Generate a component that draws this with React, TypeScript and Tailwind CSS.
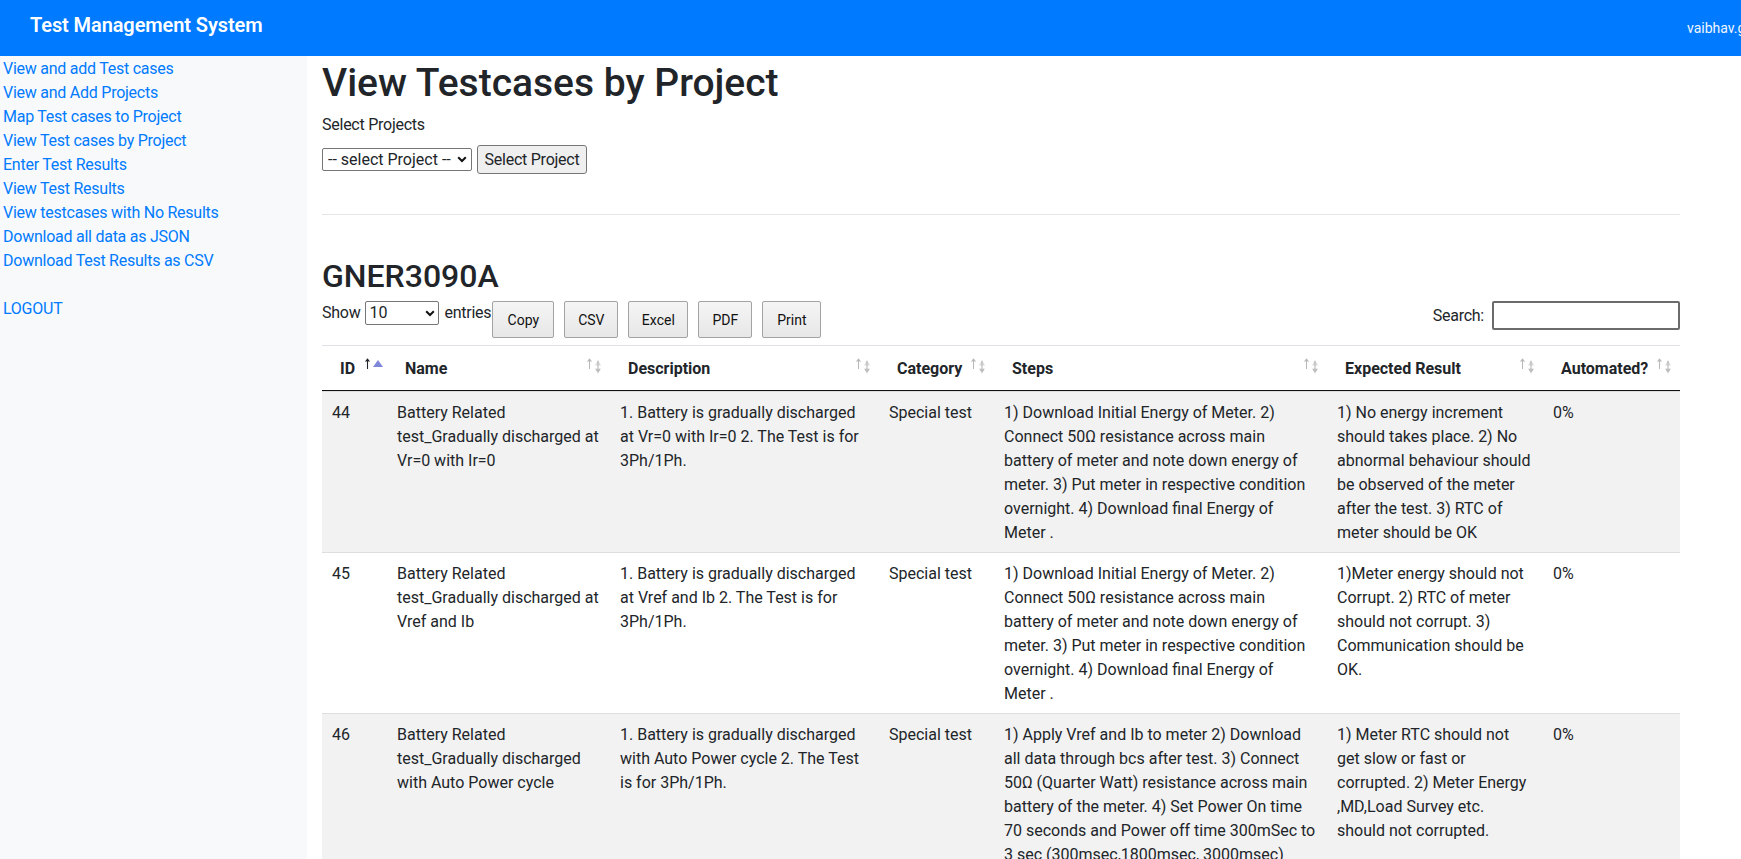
import React from 'react';

const sideLinks = [
  'View and add Test cases',
  'View and Add Projects',
  'Map Test cases to Project',
  'View Test cases by Project',
  'Enter Test Results',
  'View Test Results',
  'View testcases with No Results',
  'Download all data as JSON',
  'Download Test Results as CSV',
];

const columns = [
  { label: 'ID', sorted: true },
  { label: 'Name' },
  { label: 'Description' },
  { label: 'Category' },
  { label: 'Steps' },
  { label: 'Expected Result' },
  { label: 'Automated?' },
];

const rows = [
  {
    id: '44',
    name: 'Battery Related test_Gradually discharged at Vr=0 with Ir=0',
    description: '1. Battery is gradually discharged at Vr=0 with Ir=0 2. The Test is for 3Ph/1Ph.',
    category: 'Special test',
    steps:
      '1) Download Initial Energy of Meter. 2) Connect 50Ω resistance across main battery of meter and note down energy of meter. 3) Put meter in respective condition overnight. 4) Download final Energy of Meter .',
    expected:
      '1) No energy increment should takes place. 2) No abnormal behaviour should be observed of the meter after the test. 3) RTC of meter should be OK',
    automated: '0%',
  },
  {
    id: '45',
    name: 'Battery Related test_Gradually discharged at Vref and Ib',
    description: '1. Battery is gradually discharged at Vref and Ib 2. The Test is for 3Ph/1Ph.',
    category: 'Special test',
    steps:
      '1) Download Initial Energy of Meter. 2) Connect 50Ω resistance across main battery of meter and note down energy of meter. 3) Put meter in respective condition overnight. 4) Download final Energy of Meter .',
    expected:
      '1)Meter energy should not Corrupt. 2) RTC of meter should not corrupt. 3) Communication should be OK.',
    automated: '0%',
  },
  {
    id: '46',
    name: 'Battery Related test_Gradually discharged with Auto Power cycle',
    description: '1. Battery is gradually discharged with Auto Power cycle 2. The Test is for 3Ph/1Ph.',
    category: 'Special test',
    steps:
      '1) Apply Vref and Ib to meter 2) Download all data through bcs after test. 3) Connect 50Ω (Quarter Watt) resistance across main battery of the meter. 4) Set Power On time 70 seconds and Power off time 300mSec to 3 sec (300msec,1800msec, 3000msec) each for 1 hour. 5) Download all data through bcs after test.',
    expected:
      '1) Meter RTC should not get slow or fast or corrupted. 2) Meter Energy ,MD,Load Survey etc. should not corrupted.',
    automated: '0%',
  },
];

function SortIcon({ active }: { active?: boolean }) {
  if (active) {
    return (
      <svg width="24" height="22" viewBox="0 0 24 22" className="pointer-events-none absolute right-0 top-[10px]">
        <path d="M4.5 13V3.2M2.6 5.6L4.5 3.2l1.9 2.4" stroke="#212529" strokeWidth="1.1" fill="none" />
        <path d="M10 11h10l-5-7z" fill="#7f87db" />
      </svg>
    );
  }
  return (
    <svg width="24" height="22" viewBox="0 0 24 22" className="pointer-events-none absolute right-0 top-[10px]">
      <path d="M3.5 13V3.2M1.6 5.6L3.5 3.2l1.9 2.4" stroke="#b8b9ba" strokeWidth="1.1" fill="none" />
      <path d="M9 9.5h6L12 4z" fill="#dcdcdc" />
      <path d="M9 12.5h6L12 18z" fill="#dcdcdc" />
      <path d="M12 5v10.6M10.1 13.2l1.9 2.4 1.9-2.4" stroke="#b8b9ba" strokeWidth="1.1" fill="none" />
    </svg>
  );
}

function Chevron({ className }: { className: string }) {
  return (
    <svg width="10" height="7" viewBox="0 0 10 7" className={'pointer-events-none absolute ' + className}>
      <path d="M1.2 1.3L5 5l3.8-3.7" stroke="#111" strokeWidth="2" fill="none" />
    </svg>
  );
}

export default function App() {
  return (
    <div className="flex h-[859px] flex-col overflow-hidden bg-white font-[Roboto,'Liberation_Sans',sans-serif] text-[16px] leading-6 tracking-[-0.25px] text-[#212529]">
      <nav className="flex h-[56px] shrink-0 items-center bg-[#007bff]">
        <a className="pb-[6px] pl-[30px] text-[20px] leading-[30px] font-semibold tracking-[-0.1px] text-white">
          Test Management System
        </a>
        <div className="ml-auto w-[54px] overflow-hidden whitespace-nowrap text-[14px] leading-[21px] tracking-normal text-[#f2f6ff]">
          vaibhav.gupta
        </div>
      </nav>

      <div className="flex flex-1">
        <aside className="w-[307px] shrink-0 bg-[#f8f9fa] pl-[3px] pt-px">
          {sideLinks.map(l => (
            <a key={l} className="block text-[#007bff]">
              {l}
            </a>
          ))}
          <br />
          <a className="block text-[#007bff]">LOGOUT</a>
        </aside>

        <main className="flex-1 pl-[15px] pt-[3px]">
          <div className="w-[1358px]">
            <h1 className="mb-[6px] text-[39px] leading-[48px] font-medium tracking-normal">View Testcases by Project</h1>
            <div className="mb-2">Select Projects</div>
            <div className="flex h-[29px] items-center gap-[5px]">
              <div className="relative">
                <select className="h-[23px] w-[150px] appearance-none rounded-[2px] border border-[#767676] bg-white pl-[5px] text-[16px] leading-[21px] tracking-normal">
                  <option>-- select Project --</option>
                </select>
                <Chevron className="right-[5px] top-[8px]" />
              </div>
              <button className="h-[29px] w-[110px] rounded-[3px] border border-[#767676] bg-[#efefef] text-center">
                Select Project
              </button>
            </div>

            <hr className="mt-[40px] border-t border-[#e5e5e5]" />

            <h2 className="mt-[42px] text-[32px] leading-[38px] font-medium tracking-normal">GNER3090A</h2>

            <div className="mt-[6px] flex items-start">
              <label className="flex h-[24px] items-center gap-[5px]">
                Show
                <span className="relative">
                  <select className="h-[24px] w-[74px] appearance-none rounded-[2px] border border-[#767676] bg-white pl-[3px] leading-[22px] tracking-normal">
                    <option>10</option>
                    <option>25</option>
                    <option>50</option>
                    <option>100</option>
                  </select>
                  <Chevron className="right-[4px] top-[9px]" />
                </span>
                entries
              </label>
              <div className="ml-px flex gap-[10px]">
                {[
                  ['Copy', 'w-[62px]'],
                  ['CSV', 'w-[54px]'],
                  ['Excel', 'w-[60px]'],
                  ['PDF', 'w-[54px]'],
                  ['Print', 'w-[59px]'],
                ].map(([t, w]) => (
                  <button
                    key={t}
                    className={
                      'h-[37px] rounded-[2px] border border-[#a3a3a3] bg-linear-to-b from-[#f5f5f5] to-[#e7e7e7] text-center text-[14px] tracking-normal text-[#111] ' +
                      w
                    }
                  >
                    {t}
                  </button>
                ))}
              </div>
              <label className="ml-auto flex h-[29px] items-center gap-[8px]">
                Search:
                <input className="h-[29px] w-[188px] rounded-[2px] border-2 border-[#6b6b6b] bg-white px-1 outline-none" />
              </label>
            </div>

            <table className="mt-[7px] w-[1358px] table-fixed border-separate border-spacing-0">
              <colgroup>
                <col className="w-[65px]" />
                <col className="w-[223px]" />
                <col className="w-[269px]" />
                <col className="w-[115px]" />
                <col className="w-[333px]" />
                <col className="w-[216px]" />
                <col className="w-[137px]" />
              </colgroup>
              <thead>
                <tr>
                  {columns.map(c => (
                    <th
                      key={c.label}
                      className="relative border-t border-b border-t-[#dee2e6] border-b-[#111] pt-[11px] pb-[9px] pl-[18px] pr-[24px] text-left font-bold tracking-normal"
                    >
                      {c.label}
                      <SortIcon active={c.sorted} />
                    </th>
                  ))}
                </tr>
              </thead>
              <tbody>
                {rows.map((r, i) => (
                  <tr key={r.id} className={i % 2 === 0 ? 'bg-[#f2f2f2]' : 'bg-white'}>
                    {[r.id, r.name, r.description, r.category, r.steps, r.expected, r.automated].map((v, j) => (
                      <td
                        key={j}
                        className="border-t border-[#dedede] px-[10px] pt-[9px] pb-[7px] align-top tracking-normal"
                      >
                        {v}
                      </td>
                    ))}
                  </tr>
                ))}
              </tbody>
            </table>
          </div>
        </main>
      </div>
    </div>
  );
}
